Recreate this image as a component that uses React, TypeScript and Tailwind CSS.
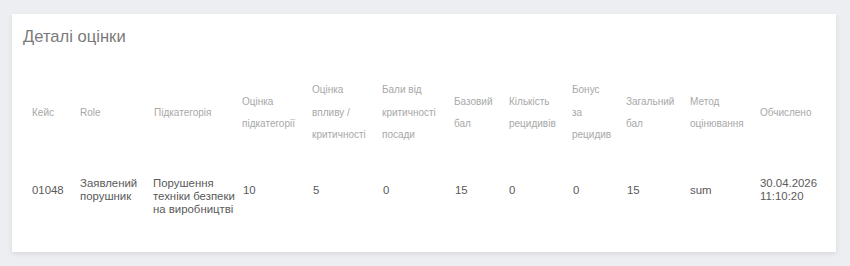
import React from "react";

const cols = "grid-cols-[48px_74px_88px_70px_70px_72px_55px_63px_54px_64px_70px_1fr]";

const headers: string[][] = [
  ["Кейс"],
  ["Role"],
  ["Підкатегорія"],
  ["Оцінка", "підкатегорії"],
  ["Оцінка", "впливу /", "критичності"],
  ["Бали від", "критичності", "посади"],
  ["Базовий", "бал"],
  ["Кількість", "рецидивів"],
  ["Бонус", "за", "рецидив"],
  ["Загальний", "бал"],
  ["Метод", "оцінювання"],
  ["Обчислено"],
];

const data: string[][] = [
  ["01048"],
  ["Заявлений", "порушник"],
  ["Порушення", "техніки безпеки", "на виробництві"],
  ["10"],
  ["5"],
  ["0"],
  ["15"],
  ["0"],
  ["0"],
  ["15"],
  ["sum"],
  ["30.04.2026", "11:10:20"],
];

const dataOffsets = ["", "", "-ml-px", "ml-px", "ml-px", "ml-px", "ml-px", "", "ml-px", "ml-px", "", ""];

export default function App() {
  return (
    <div
      className="min-h-[266px] w-[850px] bg-[#eceef2] pl-[12px] pr-[14px] pt-[14px] pb-[14px]"
      style={{ fontFamily: '"Liberation Sans", Arial, sans-serif' }}
    >
      <div className="h-[238px] bg-white shadow-[0_2px_5px_rgba(0,0,0,0.09)] pt-[11px] pl-[11px]">
        <div className="text-[16.6px] leading-[24px] text-[#7a7a7a]">Деталі оцінки</div>
        <div className="pl-[9px] pt-[30px]">
          <div className={`grid ${cols} items-center h-[68px] text-[10px] leading-[22.5px] text-[#a8a8a8]`}>
            {headers.map((h, i) => (
              <div key={i} className="whitespace-nowrap">
                {h.map((l, j) => (
                  <div key={j}>{l}</div>
                ))}
              </div>
            ))}
          </div>
          <div className={`grid ${cols} items-start mt-[29.5px] text-[11.4px] text-[#5a5a5a]`}>
            {data.map((d, i) => (
              <div
                key={i}
                className={`whitespace-nowrap ${dataOffsets[i]} ${d.length === 1 ? "leading-[27px]" : "leading-[13.4px]"}`}
              >
                {d.map((l, j) => (
                  <div key={j}>{l}</div>
                ))}
              </div>
            ))}
          </div>
        </div>
      </div>
    </div>
  );
}
